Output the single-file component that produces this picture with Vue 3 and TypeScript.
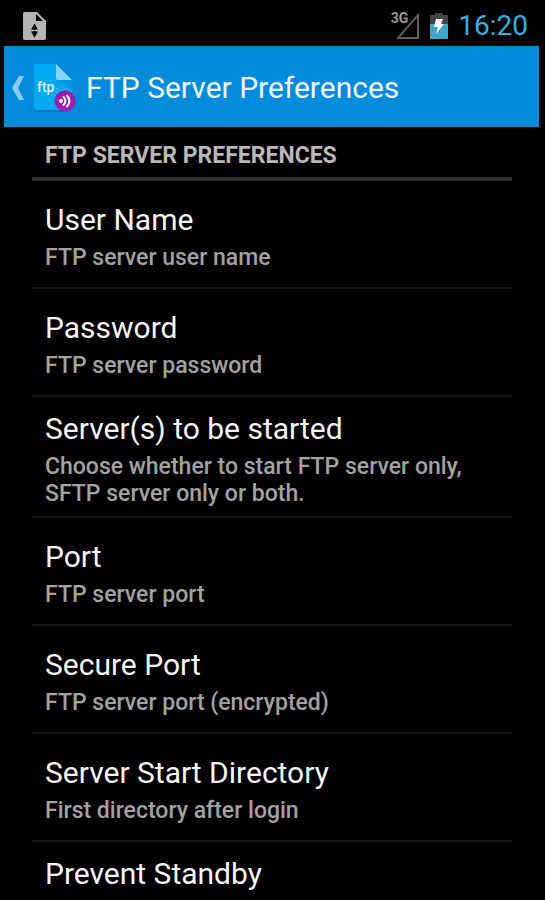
<script setup lang="ts">
interface Preference {
  title: string
  summary?: string
}

const preferences: Preference[] = [
  { title: 'User Name', summary: 'FTP server user name' },
  { title: 'Password', summary: 'FTP server password' },
  {
    title: 'Server(s) to be started',
    summary: 'Choose whether to start FTP server only, SFTP server only or both.',
  },
  { title: 'Port', summary: 'FTP server port' },
  { title: 'Secure Port', summary: 'FTP server port (encrypted)' },
  { title: 'Server Start Directory', summary: 'First directory after login' },
  { title: 'Prevent Standby' },
]
</script>

<template>
  <div class="screen">
    <header class="status">
      <svg class="notification" viewBox="0 0 24 28" aria-hidden="true">
        <path d="M2 0H14L23 9V26Q23 28 21 28H2Q0 28 0 26V2Q0 0 2 0Z" fill="#b4b4b4" />
        <path d="M13 2V9H20Z" fill="#000" />
        <path d="M11.500 11.500L15 17.500H12.500V19.500H15L11.500 25.500L8 19.500H10.500V17.500H8Z" fill="#000" />
        <path d="M8 18H15V19H8Z" fill="#b4b4b4" />
      </svg>
      <div class="indicators">
        <span class="network">3G</span>
        <svg class="signal" viewBox="0 0 24 27" aria-hidden="true">
          <path d="M22 2V25H2Z" fill="none" stroke="#5c5c5c" stroke-width="2" />
        </svg>
        <svg class="battery" viewBox="0 0 18 26" aria-hidden="true">
          <path d="M5 0H13V2H18V11H0V2H5Z" fill="#444" />
          <path d="M0 11H18V26H0Z" fill="#3fa5ca" />
          <path d="M6 6H13L11 11H14L6 21L8 14H4Z" fill="#fff" />
        </svg>
        <time class="clock">16:20</time>
      </div>
    </header>

    <div class="action-bar">
      <button class="up" type="button" aria-label="Navigate up">
        <svg class="chevron" viewBox="0 0 12 26" aria-hidden="true">
          <path d="M7 0H12L6 12L12 24H7L0 12Z" fill="#8bcdf4" />
        </svg>
        <svg class="logo" viewBox="0 0 42 50" aria-hidden="true">
          <path d="M3 2H22L38 18V45Q38 48 35 48H3Q0 48 0 45V5Q0 2 3 2Z" fill="#0478bd" />
          <path d="M3 0H22L38 16V43Q38 46 35 46H3Q0 46 0 43V3Q0 0 3 0Z" fill="#04a9f4" />
          <path d="M22 16H38V27Z" fill="#0398df" />
          <path d="M22 0L38 16H24Q22 16 22 14Z" fill="#82d4fa" />
          <text x="3" y="28" class="logo-text">ftp</text>
          <circle cx="31" cy="37" r="10.500" fill="#9c1bb0" />
          <circle cx="27" cy="37" r="2" fill="#fff" />
          <path
            d="M29 32.500Q34 37 29 41.500M32.500 31Q38.500 37 32.500 43"
            fill="none"
            stroke="#fff"
            stroke-width="2"
          />
        </svg>
      </button>
      <h1 class="heading">FTP Server Preferences</h1>
    </div>

    <main class="content">
      <h2 class="category">FTP SERVER PREFERENCES</h2>
      <ul class="list">
        <li v-for="item in preferences" :key="item.title" class="item">
          <button class="row" :class="{ short: !item.summary }" type="button">
            <span class="title">{{ item.title }}</span>
            <span v-if="item.summary" class="summary">{{ item.summary }}</span>
          </button>
        </li>
      </ul>
    </main>
  </div>
</template>

<style>
body {
  background: #000;
}
</style>

<style scoped>
.screen {
  height: 100vh;
  overflow: hidden;
  background: #000;
  color: #f6f6f6;
  font-family: Roboto, sans-serif;
}

button {
  border: 0;
  background: none;
  color: inherit;
  font: inherit;
  cursor: pointer;
}

.status {
  display: flex;
  align-items: center;
  justify-content: space-between;
  height: 46px;
  padding: 6px 17px 0 23px;
  box-sizing: border-box;
}

.notification {
  width: 24px;
  height: 28px;
}

.indicators {
  display: flex;
  align-items: center;
}

.network {
  align-self: flex-start;
  color: #999;
  font-size: 14px;
  font-weight: 700;
  line-height: 20px;
}

.signal {
  width: 24px;
  height: 27px;
  margin-left: -12px;
}

.battery {
  width: 18px;
  height: 26px;
  margin: 0 10px;
}

.clock {
  color: #35b0e0;
  font-size: 28px;
  line-height: 36px;
}

.action-bar {
  display: flex;
  align-items: center;
  height: 81px;
  margin: 0 6px 0 4px;
  background: #038bdb;
}

.up {
  display: flex;
  align-items: center;
  gap: 10px;
  padding: 4px 0 0 8px;
}

.chevron {
  width: 12px;
  height: 26px;
}

.logo {
  width: 42px;
  height: 50px;
}

.logo-text {
  fill: #d9f2fe;
  font-size: 14px;
  font-weight: 500;
}

.heading {
  margin: 0 0 0 10px;
  padding-top: 2px;
  font-size: 30px;
  font-weight: 400;
  line-height: 36px;
  color: #f0f8fe;
}

.content {
  padding: 0 33px 0 32px;
}

.category {
  margin: 0;
  padding: 15px 13px 7px;
  border-bottom: 4px solid #303030;
  color: #b8b8b8;
  font-size: 23px;
  font-weight: 700;
  line-height: 28px;
}

.list {
  margin: 0;
  padding: 0;
  list-style: none;
}

.item {
  border-bottom: 2px solid #161616;
}

.row {
  display: flex;
  flex-direction: column;
  justify-content: center;
  gap: 5px;
  width: 100%;
  min-height: 106px;
  padding: 13px 13px 9px;
  text-align: left;
}

.short {
  justify-content: flex-start;
}

.title {
  font-size: 30px;
  font-weight: 400;
  line-height: 38px;
}

.summary {
  color: #a2a2a2;
  font-size: 23px;
  font-weight: 500;
  line-height: 27px;
}
</style>
